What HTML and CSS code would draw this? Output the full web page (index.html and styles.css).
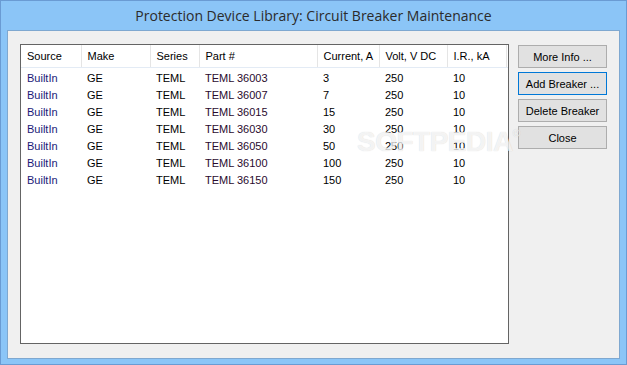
FILE: index.html
```html
<!DOCTYPE html>
<html lang="en">
<head>
    <meta charset="UTF-8">
    <title>Protection Device Library: Circuit Breaker Maintenance</title>
    <link rel="stylesheet" href="styles.css">
</head>
<body>
    <div class="window">
        <div class="titlebar">Protection Device Library: Circuit Breaker Maintenance</div>

        <div class="client">
            <!-- Breaker list -->
            <div class="listview">
                <table class="breakers">
                    <colgroup>
                        <col class="c-source">
                        <col class="c-make">
                        <col class="c-series">
                        <col class="c-part">
                        <col class="c-current">
                        <col class="c-volt">
                        <col class="c-ir">
                        <col>
                    </colgroup>
                    <thead>
                        <tr>
                            <th>Source</th>
                            <th>Make</th>
                            <th>Series</th>
                            <th>Part #</th>
                            <th>Current, A</th>
                            <th>Volt, V DC</th>
                            <th>I.R., kA</th>
                            <th class="filler"></th>
                        </tr>
                    </thead>
                    <tbody>
                        <tr><td class="source">BuiltIn</td><td>GE</td><td>TEML</td><td class="part">TEML 36003</td><td>3</td><td>250</td><td>10</td><td></td></tr>
                        <tr><td class="source">BuiltIn</td><td>GE</td><td>TEML</td><td class="part">TEML 36007</td><td>7</td><td>250</td><td>10</td><td></td></tr>
                        <tr><td class="source">BuiltIn</td><td>GE</td><td>TEML</td><td class="part">TEML 36015</td><td>15</td><td>250</td><td>10</td><td></td></tr>
                        <tr><td class="source">BuiltIn</td><td>GE</td><td>TEML</td><td class="part">TEML 36030</td><td>30</td><td>250</td><td>10</td><td></td></tr>
                        <tr><td class="source">BuiltIn</td><td>GE</td><td>TEML</td><td class="part">TEML 36050</td><td>50</td><td>250</td><td>10</td><td></td></tr>
                        <tr><td class="source">BuiltIn</td><td>GE</td><td>TEML</td><td class="part">TEML 36100</td><td>100</td><td>250</td><td>10</td><td></td></tr>
                        <tr><td class="source">BuiltIn</td><td>GE</td><td>TEML</td><td class="part">TEML 36150</td><td>150</td><td>250</td><td>10</td><td></td></tr>
                    </tbody>
                </table>
            </div>

            <!-- Buttons -->
            <div class="actions">
                <button>More Info ...</button>
                <button class="default">Add Breaker ...</button>
                <button>Delete Breaker</button>
                <button>Close</button>
            </div>

            <div class="watermark">SOFTPEDIA<span class="reg">®</span></div>
        </div>
    </div>
</body>
</html>
```

FILE: styles.css
```css
body {
    margin: 0;
    font-family: "Liberation Sans", Arial, sans-serif;
    font-size: 11px;
}

.window {
    width: 627px;
    height: 365px;
    box-sizing: border-box;
    background-color: #8bc5f7;
    border: 1px solid #6a9bd3;
    padding: 0 6px 6px 6px;
    display: flex;
    flex-direction: column;
}

.titlebar {
    height: 29px;
    line-height: 29px;
    text-align: center;
    font-family: "Open Sans", "Noto Sans", sans-serif;
    font-size: 14px;
    color: #2b2b2b;
    flex-shrink: 0;
}

.client {
    position: relative;
    flex: 1;
    background-color: #f0f0f0;
    border: 1px solid #7fa8d0;
    padding: 13px 11px 14px 12px;
    display: flex;
    gap: 9px;
}

.listview {
    width: 487px;
    height: 298px;
    background-color: white;
    border: 1px solid #646464;
    overflow: hidden;
}

.breakers {
    width: 100%;
    table-layout: fixed;
    border-collapse: collapse;
}

.c-source { width: 60px; }
.c-make { width: 69px; }
.c-series { width: 49px; }
.c-part { width: 118px; }
.c-current { width: 62px; }
.c-volt { width: 68px; }
.c-ir { width: 59px; }

.breakers th {
    height: 22px;
    padding: 0 0 0 6px;
    text-align: left;
    font-weight: normal;
    color: #000;
    border-right: 1px solid #e5e5e5;
    border-bottom: 1px solid #e3ebf5;
    white-space: nowrap;
}

.breakers th.filler {
    border-right: none;
}

.breakers tbody tr:first-child td {
    padding-top: 1px;
}

.breakers td {
    height: 17px;
    padding: 0 0 0 6px;
    color: #000;
    white-space: nowrap;
}

.breakers .source {
    color: #1a1a78;
}

.breakers .part {
    color: #2a0a2e;
}

/* faint site stamp lying over the list */
.watermark {
    position: absolute;
    left: 349px;
    top: 95px;
    font-family: "Liberation Sans", Arial, sans-serif;
    font-weight: bold;
    font-size: 28px;
    letter-spacing: -0.5px;
    color: rgba(255, 255, 255, 0.75);
    text-shadow: 0 0 1px rgba(0, 0, 0, 0.18);
    pointer-events: none;
    white-space: nowrap;
}

.watermark .reg {
    font-size: 10px;
    vertical-align: top;
    position: relative;
    top: 2px;
}

.actions {
    display: flex;
    flex-direction: column;
    gap: 4px;
    padding-top: 1px;
}

button {
    width: 89px;
    height: 23px;
    padding: 0;
    font-family: "Liberation Sans", Arial, sans-serif;
    font-size: 11px;
    color: #000;
    background-color: #e1e1e1;
    border: 1px solid #adadad;
}

button.default {
    border-color: #0078d7;
}
```
